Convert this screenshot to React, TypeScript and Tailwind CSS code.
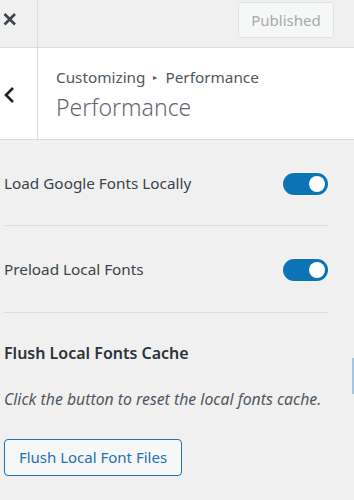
import React from "react";

function Toggle() {
  return (
    <div className="w-[45px] h-[22px] rounded-full bg-[#0b73b6] flex items-center justify-end pr-[3px]">
      <div className="w-[16px] h-[16px] rounded-full bg-white" />
    </div>
  );
}

export default function App() {
  return (
    <div
      className="w-[354px] h-[500px] bg-[#f0f0f1] text-[#3c434a] overflow-hidden relative"
      style={{ fontFamily: '"Noto Sans", "Open Sans", sans-serif' }}
    >
      {/* header */}
      <div className="h-[48px] flex border-b border-[#dcdcde]">
        <div className="w-[38px] border-r border-[#dcdcde] flex items-start pt-[11px] pl-[2px]">
          <svg width="16" height="16" viewBox="0 0 16 16">
            <path d="M2.5 3 L13 13.5 M13 3 L2.5 13.5" stroke="#3c434a" strokeWidth="2.6" strokeLinecap="butt" />
          </svg>
        </div>
        <div className="flex-1 flex justify-end items-start pt-[2px] pr-[20px]">
          <div className="w-[96px] h-[36px] border border-[#e2e3e5] rounded-[3px] bg-[#f6f7f7] text-[#a7aaad] text-[15px] flex items-center justify-center">
            Published
          </div>
        </div>
      </div>
      {/* section title */}
      <div className="h-[92px] flex bg-white border-b border-[#dcdcde]">
        <div className="w-[38px] border-r border-[#dcdcde] flex items-center pl-[3px] pt-[2px]">
          <svg width="12" height="18" viewBox="0 0 12 18">
            <path d="M10 2 L3 9 L10 16" fill="none" stroke="#1d2327" strokeWidth="2.6" />
          </svg>
        </div>
        <div className="flex-1 pl-[18px] pt-[18px]">
          <div className="text-[15.3px] text-[#50575e] flex items-center leading-[22px]">
            <span>Customizing</span>
            <span className="text-[8px] mx-[8px]">▸</span>
            <span>Performance</span>
          </div>
          <div className="text-[23px] font-light text-[#646970] leading-[30px] mt-[4px]">Performance</div>
        </div>
      </div>
      {/* controls */}
      <div className="pl-[4px] pr-[26px]">
        <div className="h-[86px] flex items-center justify-between border-b border-[#dcdcde] pt-[2px]">
          <span className="text-[15.3px]">Load Google Fonts Locally</span>
          <Toggle />
        </div>
        <div className="h-[87px] flex items-center justify-between border-b border-[#dcdcde] pt-[1px]">
          <span className="text-[15.3px]">Preload Local Fonts</span>
          <Toggle />
        </div>
        <div className="pt-[29px]">
          <div className="text-[16px] font-semibold text-[#2c3338] leading-[22px]">Flush Local Fonts Cache</div>
          <div className="text-[15.8px] italic text-[#50575e] mt-[24px] leading-[22px] whitespace-nowrap">
            Click the button to reset the local fonts cache.
          </div>
          <div className="mt-[29px] w-[178px] h-[37px] border border-[#2271b1] rounded-[4px] bg-[#f6f7f7] text-[#2271b1] text-[15px] flex items-center justify-center">
            Flush Local Font Files
          </div>
        </div>
      </div>
      <div className="absolute right-0 top-[358px] w-[2px] h-[36px] bg-[#a7c4e0]" />
    </div>
  );
}
